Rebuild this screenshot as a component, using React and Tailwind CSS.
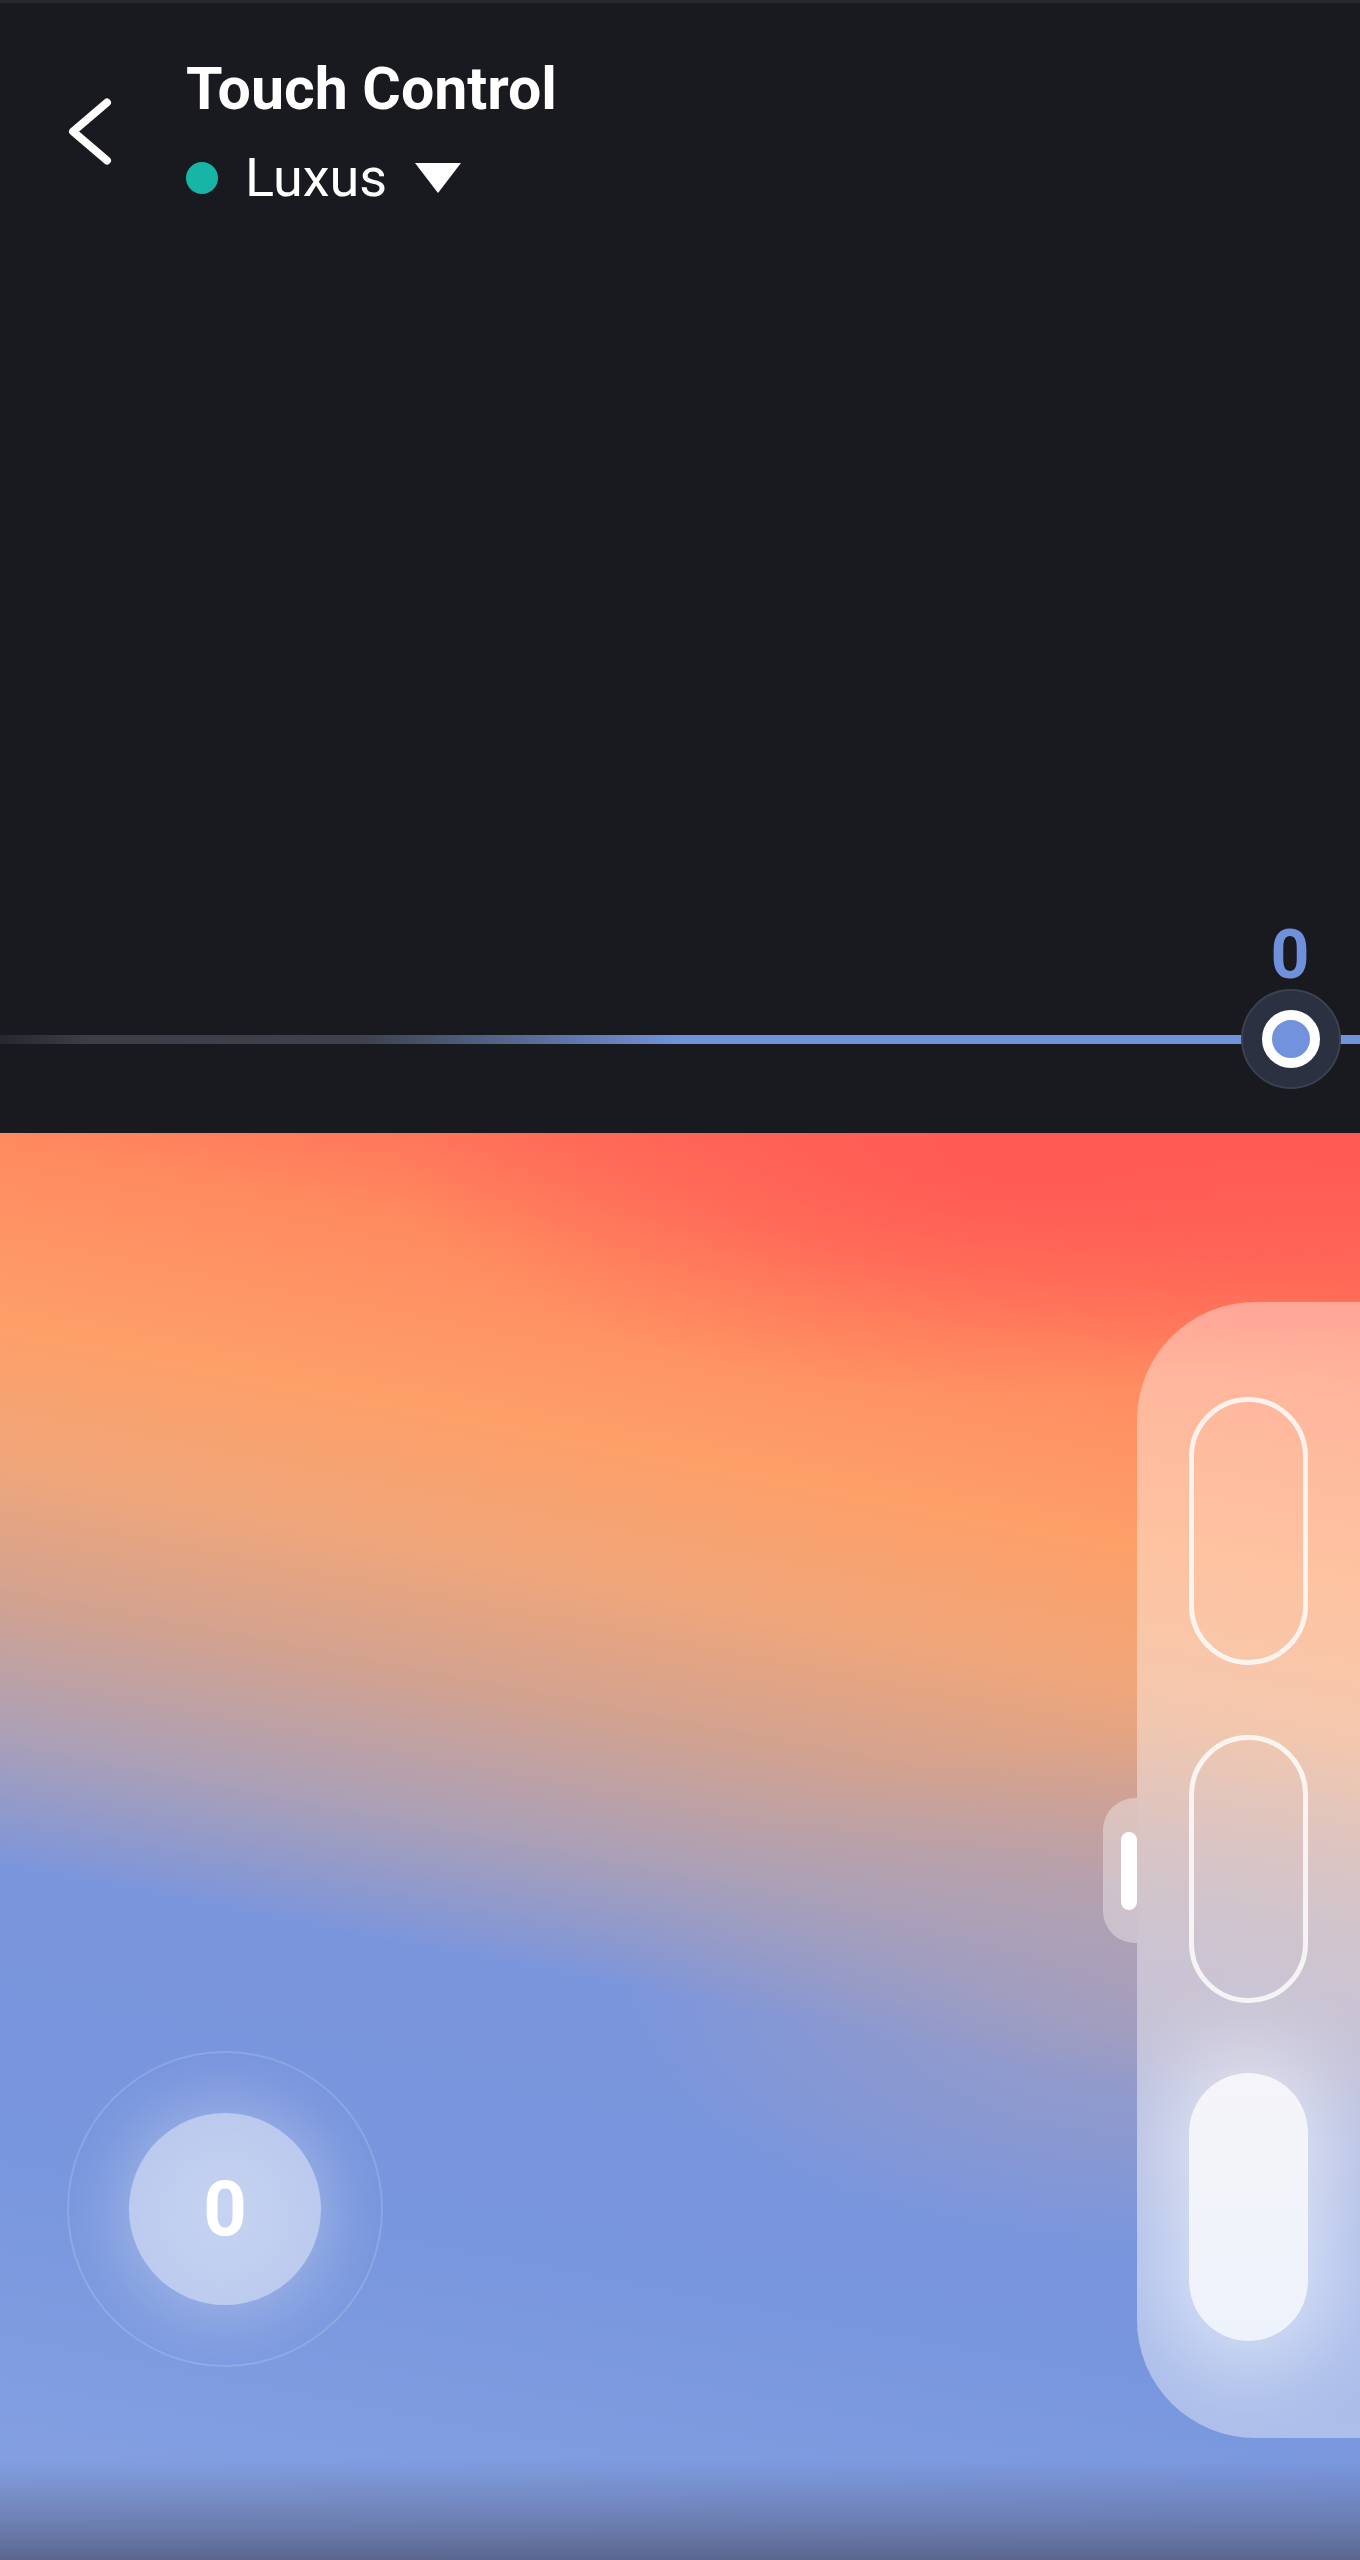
import React from 'react';

const font = { fontFamily: 'Roboto, "Liberation Sans", sans-serif' };

const BackIcon = () => (
    <svg width="48" height="68" viewBox="0 0 48 68" className="block">
        <path d="M40 4.5 L6 33.5 L40 62.5" fill="none" stroke="white" strokeWidth="8" strokeLinecap="round" strokeLinejoin="round" />
    </svg>
);

const Caret = () => (
    <svg width="46" height="30" viewBox="0 0 46 30" className="block">
        <polygon points="0,0 46,0 23,30" fill="white" />
    </svg>
);

const Header = () => (
    <div className="flex items-start">
        <div className="ml-[67px] mt-[95px]">
            <BackIcon />
        </div>
        <div className="ml-[71px] mt-[56px] flex flex-col">
            <h1 className="text-[59px] leading-none font-bold text-white">Touch Control</h1>
            <div className="mt-[33px] flex items-center">
                <span className="w-[32px] h-[32px] rounded-full bg-[#17b5a6]"></span>
                <span className="ml-[27px] text-[54px] leading-none text-white">Luxus</span>
                <span className="ml-[28px]">
                    <Caret />
                </span>
            </div>
        </div>
    </div>
);

const SpeedSlider = ({ value }) => (
    <div className="pb-[44px]">
        <div className="flex justify-end pr-[20px]">
            <div className="w-[100px] text-center text-[68px] leading-none font-bold text-[#7090dc]">{value}</div>
        </div>
        <div className="relative h-[100px] flex items-center">
            <div className="h-[9px] w-full bg-[linear-gradient(to_right,#25282e_0px,#3b3f48_90px,#3d414b_360px,#7292dc_680px,#7292dc_100%)]"></div>
            {/* knob */}
            <div className="absolute left-[1241px] top-0 w-[100px] h-[100px] rounded-full bg-[#2b3140] border-2 border-[#3a4150] flex items-center justify-center">
                <div className="w-[58px] h-[58px] rounded-full border-[10px] border-white bg-[#7292dd]"></div>
            </div>
        </div>
    </div>
);

const Joystick = ({ value }) => (
    <div className="w-[316px] h-[316px] rounded-full border-2 border-white/15 bg-[radial-gradient(circle,rgba(255,255,255,0.16)_0%,rgba(255,255,255,0.07)_55%,rgba(255,255,255,0)_72%)] flex items-center justify-center">
        <div className="w-[192px] h-[192px] rounded-full bg-[radial-gradient(circle,rgba(255,255,255,0.5)_0%,rgba(255,255,255,0.42)_100%)] shadow-[0_0_40px_6px_rgba(255,255,255,0.16)] flex items-center justify-center">
            <span className="text-[76px] leading-none font-bold text-white">{value}</span>
        </div>
    </div>
);

const ModePanel = () => (
    <div className="flex items-start">
        <div className="mt-[496px] w-[34px] h-[145px] rounded-l-[32px] bg-white/35 flex items-center justify-end">
            <div className="w-[16px] h-[78px] rounded-full bg-white"></div>
        </div>
        <div className="w-[223px] h-[1136px] rounded-l-[118px] bg-white/[0.38] overflow-hidden flex flex-col items-center pt-[95px] gap-[70px]">
            <div className="w-[119px] h-[268px] rounded-full border-[5px] border-white/80"></div>
            <div className="w-[119px] h-[268px] rounded-full border-[5px] border-white/80"></div>
            <div className="w-[119px] h-[268px] rounded-full bg-[linear-gradient(to_bottom,#f5f5f8,#eef2fc)] shadow-[0_0_80px_30px_rgba(255,255,255,0.5)]"></div>
        </div>
    </div>
);

export default function App() {
    return (
        <div className="w-[1360px] h-[2560px] flex flex-col overflow-hidden" style={font}>
            {/* top half: header + speed slider */}
            <div className="h-[1133px] flex flex-col bg-[#181a1f] border-t-[3px] border-[#25282d]">
                <Header />
                <div className="mt-auto">
                    <SpeedSlider value={0} />
                </div>
            </div>

            {/* touch area */}
            <div className="flex-1 flex justify-between bg-[linear-gradient(to_top,#5b668e_0px,rgba(96,108,150,0.6)_40px,rgba(110,130,190,0)_100px),radial-gradient(ellipse_620px_230px_at_1020px_30px,rgba(255,88,84,0.85)_0%,rgba(255,88,84,0)_100%),radial-gradient(ellipse_560px_260px_at_1180px_860px,rgba(172,160,184,0.75)_0%,rgba(172,160,184,0)_100%),linear-gradient(191deg,#ff5a55_0%,#ff6b58_8%,#ff8a60_16%,#fd9f68_27%,#f0a67a_35%,#d2a290_43%,#aca0b6_51%,#7b95dc_59%,#7896de_75%,#84a0e2_95%,#86a1e3_100%)]">
                <div className="pl-[67px] pt-[918px]">
                    <Joystick value={0} />
                </div>
                <div className="pt-[169px]">
                    <ModePanel />
                </div>
            </div>
        </div>
    );
}
